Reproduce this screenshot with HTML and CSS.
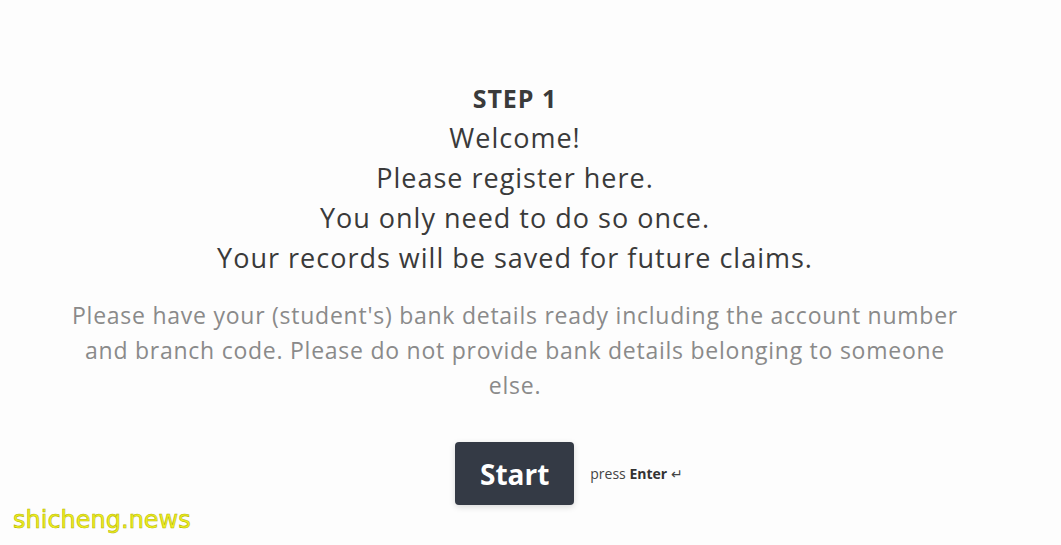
FILE: index.html
```html
<!DOCTYPE html>
<html lang="en">
  <head>
    <meta charset="UTF-8" />
    <meta name="viewport" content="width=device-width, initial-scale=1.0" />
    <link rel="stylesheet" href="styles.css">
  </head>
  <body>
    <div id="container">
      <div class="question">
        <div class="step">STEP 1</div>
        <div class="line">Welcome!</div>
        <div class="line">Please register here.</div>
        <div class="line">You only need to do so once.</div>
        <div class="line">Your records will be saved for future claims.</div>
      </div>

      <p class="description">
        Please have your (student's) bank details ready including the account number
        and branch code. Please do not provide bank details belonging to someone
        else.
      </p>

      <div class="actions">
        <button class="start-btn">Start</button>
        <span class="hint">press <b>Enter</b> &#8629;</span>
      </div>
    </div>

    <div class="watermark">shicheng.news</div>
  </body>
</html>
```

FILE: styles.css
```css
body {
  font-family: "Open Sans", "Noto Sans", sans-serif;
  background-color: #fdfdfd;
  margin: 0;
  padding: 0;
  height: 545px;
  overflow: hidden;
}

#container {
  width: 900px;
  margin-left: 65px;
  padding-top: 78px;
  text-align: center;
}

.question {
  color: #3a3a3a;
  font-size: 27px;
  line-height: 40px;
  letter-spacing: 1px;
}

.step {
  font-weight: bold;
  font-size: 25px;
}

.description {
  color: #8a8a8a;
  font-size: 23px;
  line-height: 35px;
  letter-spacing: 0.75px;
  margin: 20px 0 0;
}

.actions {
  display: flex;
  justify-content: center;
  align-items: center;
  margin-top: 39px;
  padding-left: 108px;
}

.start-btn {
  font-family: inherit;
  background-color: #343a45;
  color: #fff;
  font-size: 28px;
  font-weight: bold;
  border: none;
  border-radius: 4px;
  width: 119px;
  height: 63px;
  box-shadow: 0 2px 6px rgba(0, 0, 0, 0.15);
}

.hint {
  font-size: 14px;
  color: #444;
  margin-left: 16px;
}

.hint b {
  color: #333;
}

.watermark {
  position: absolute;
  left: 13px;
  top: 506px;
  font-family: "DejaVu Sans", sans-serif;
  font-size: 24px;
  color: #f0f020;
  -webkit-text-stroke: 0.6px #b8b800;
}
```
